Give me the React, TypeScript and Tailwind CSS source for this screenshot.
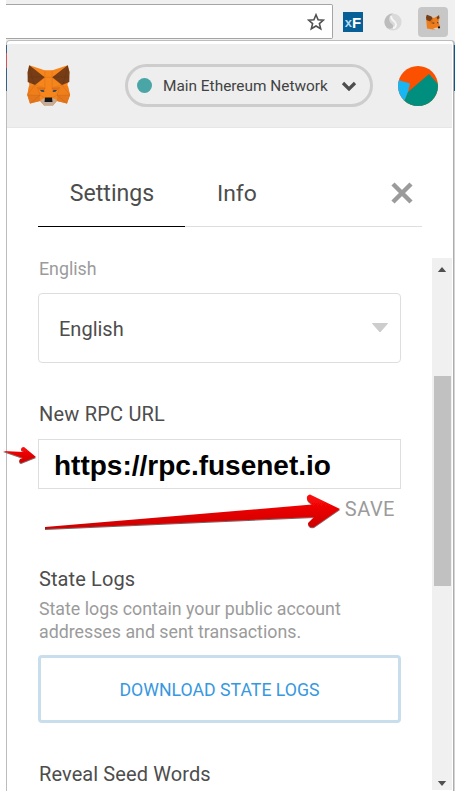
import React from "react";

function Fox({ className }: { className?: string }) {
  return (
    <svg viewBox="0 0 44 42" className={className} aria-label="MetaMask">
      <path d="M2.300 .3 17.700 5.300H25.500L40.700 .3 42.500 7 40.500 20 43 30 40 38.500 30 36 26 40.500H17L13 36 3 38.500 .3 30 2.300 20 .6 8Z" fill="#f6851b" />
      <path d="M2.300 .3 17.700 12.300 8 20 .7 17 .6 7ZM40.700 .3 25.300 12.300 35 20 42.300 17 42.500 7Z" fill="#763d16" />
      <path d="M2 21 8 20 14 29 .3 30ZM41 21 35 20 29 29 43 30Z" fill="#f07f1a" />
      <path d="M10 22 18 23 17.500 26 12 25ZM33 22 25 23 25.500 26 31 25Z" fill="#de701b" />
      <path d="M13 25 16.500 25 17.500 27 14.500 26.700ZM30 25 26.500 25 25.500 27 28.500 26.700Z" fill="#2f465c" />
      <path d="M.3 30H13V36L3 38.500ZM43 30H30V36L40 38.500Z" fill="#e4761b" />
      <path d="M13.500 35 18 33H25.500L30 35 26 40.500H17Z" fill="#c0ad9e" />
      <path d="M18 32.500H25L25.500 37H17.500Z" fill="#161616" />
      <path d="M17.700 12.300 18 5.500M25.300 12.300 25 5.500M17.700 12.300H25.300M17.700 12.300 18 24M25.300 12.300 25 24M8 20 17.700 12.300M35 20 25.300 12.300M8 20 18 23M35 20 25 23M10 22 13 30 .3 30 8 20M33 22 30 30 43 30 35 20M13 30 18 33M30 30 25 33M3 38.500 13 30M40 38.500 30 30" fill="none" stroke="#9b5018" strokeOpacity=".4" strokeWidth=".5" />
      <path d="M2 1 7 19M41 1 36 19M1 12 17 12M42 12 26 12" fill="none" stroke="#4f260c" strokeOpacity=".4" strokeWidth=".5" />
    </svg>
  );
}

function SmallFox() {
  return (
    <svg viewBox="0 0 16 16" className="h-[16px] w-[16px]">
      <path d="M1 1 6.500 3 9 4 13.500 1.500 14.500 4 13.500 8 15.300 13 13.500 15 8 15.500 2 14.500 1.500 9Z" fill="#ed7c1c" />
      <path d="M2 .8 6.500 2.500 7.500 5 5 7.500 1.500 6 1 3.500ZM14 1 14.500 4 12.500 5.500 11.500 3.500Z" fill="#73401c" />
      <path d="M5 7.500 7 5 8 9 6 10Z" fill="#d96a1a" />
      <path d="M7.500 8.500h1.800v1.300H7.500ZM12 8h1.300v1.200H12Z" fill="#5a4436" />
      <path d="M8 14.500 12 13.500 14 14.500 11.500 15.700Z" fill="#ddd2c8" />
      <path d="M13 12.600h2v1.600h-2Z" fill="#161616" />
    </svg>
  );
}

function Toolbar() {
  return (
    <div className="flex h-[40px] bg-[#f0f0f0]">
      <div className="mt-[4px] flex h-[35px] w-[327px] items-center justify-end rounded-r-[2px] border border-l-0 border-[#a5a5a5] bg-white pr-[7px]">
        <svg viewBox="0 0 18 18" className="h-[18px] w-[18px]">
          <path d="M9 1.8 11.1 6.7 16.5 7.1 12.4 10.6 13.7 15.8 9 13 4.3 15.8 5.6 10.6 1.5 7.1 6.9 6.7Z" fill="none" stroke="#505050" strokeWidth="1.6" />
        </svg>
      </div>
      <div className="ml-[10px] mt-[12px] flex h-[20px] w-[20px] items-center justify-center bg-[#075f98] font-['Liberation_Sans',Arial,sans-serif] text-[15px] font-bold leading-none text-white">
        <span className="text-[13px] text-[#b5d9ef]">x</span>F
      </div>
      <svg viewBox="0 0 18 18" className="ml-[21px] mt-[13px] h-[18px] w-[18px]">
        <circle cx="9" cy="9" r="8.6" fill="#dadada" />
        <path d="M9 .4A8.6 8.6 0 0 0 3 15C8 17 11 14 8 11 4 8 4 3 9 .4Z" fill="#bcbcbc" />
        <path d="M7.500 3C5.500 7 12.500 8 12 11.500 12 13.500 10.500 15 9 15" fill="none" stroke="#f6f6f6" strokeWidth="2" />
      </svg>
      <div className="ml-[16px] mt-[7px] flex h-[30px] w-[30px] items-center justify-center rounded-[4px] bg-[#c7c7c7]">
        <SmallFox />
      </div>
    </div>
  );
}

function Header() {
  return (
    <header className="mr-px flex h-[84px] items-center border-b border-[#e6e6e6] bg-[#eee] pl-[20px]">
      <Fox className="h-[42px] w-[44px]" />
      <div className="ml-[54px] flex h-[43px] w-[248px] items-center rounded-full border-[3px] border-[#cdcdcd] pl-[9px]">
        <span className="h-[15px] w-[15px] rounded-full bg-[#4aa6a6]" />
        <span className="ml-[11px] w-[163px] whitespace-nowrap pt-[2px] text-[15.4px] text-[#424242]">Main Ethereum Network</span>
        <svg viewBox="0 0 16 10" className="ml-[15px] h-[10px] w-[16px]"><path d="m2 2 6 6 6-6" fill="none" stroke="#4d4d4d" strokeWidth="3.2" /></svg>
      </div>
      <svg viewBox="0 0 40 40" className="ml-[25px] h-[40px] w-[40px] overflow-hidden rounded-full">
        <path d="M0 0h40v40H0z" fill="#fc5001" />
        <path d="M0 14 12 17.5 10 26 6 36 0 40Z" fill="#18b6f2" />
        <path d="M6 36 10 26 31 8 40 18V40H5Z" fill="#008f7f" />
      </svg>
    </header>
  );
}

function Settings() {
  return (
    <div className="flex w-[363px] flex-col text-[#4d4d4d]">
      <div className="h-[22px] whitespace-nowrap pl-px text-[17.8px] leading-[22px] text-[#9b9b9b]">English</div>
      <div className="mt-[13px] flex h-[70px] items-center justify-between rounded-[4px] border border-[#dedede] pl-[20px] pr-[11px] text-[20px]">
        <span className="pt-[2px]">English</span>
        <svg viewBox="0 0 18 10" className="h-[10px] w-[18px]"><path d="M1.500 .5H16.500L9 9Z" fill="#cdcdcd" stroke="#cdcdcd" strokeLinejoin="round" /></svg>
      </div>
      <div className="mt-[39px] h-[24px] whitespace-nowrap pl-px text-[20px] leading-[24px] tracking-[.2px]">New RPC URL</div>
      <div className="mt-[13px] flex h-[50px] items-center border border-[#dedede] pl-[15px] pt-[4px] font-['Liberation_Sans',Arial,sans-serif] text-[28px] font-bold text-black">https://rpc.fusenet.io</div>
      <div className="mt-[8px] h-[24px] pr-[6px] text-right text-[20px] leading-[24px] tracking-[.5px] text-[#9b9b9b]">SAVE</div>
      <div className="mt-[46px] h-[24px] pl-px text-[20px] leading-[24px] tracking-[.1px]">State Logs</div>
      <div className="mt-[6px] whitespace-nowrap pl-px text-[17.8px] leading-[23px] text-[#9b9b9b]">State logs contain your public account<br />addresses and sent transactions.</div>
      <div className="mt-[12px] flex h-[68px] items-center justify-center rounded-[4px] border-[3px] border-[#c8deed] pt-[2px] text-[17.7px] text-[#3798df]">DOWNLOAD STATE LOGS</div>
      <div className="mt-[39px] h-[24px] pl-px text-[20px] leading-[24px] tracking-[.1px]">Reveal Seed Words</div>
    </div>
  );
}

export default function App() {
  return (
    <div className="relative h-[791px] w-[455px] overflow-hidden bg-white pl-[6px] font-[Roboto,sans-serif]">
      <Toolbar />
      <div className="bg-[#f0f0f0]">
        <div className="h-[751px] rounded-t-[4px] border-l border-r-2 border-t border-[#bcbcbc] bg-white pt-[3px]">
          <Header />
          <nav className="ml-[31px] flex h-[99px] w-[384px] border-b border-[#dedede] pt-[44px] text-[23.1px] leading-[36px] text-[#4d4d4d]">
            <div className="-mb-px flex h-[55px] w-[147px] justify-center border-b border-black pl-px pt-[4px]">Settings</div>
            <div className="ml-[32px] pt-[4px] text-[22.9px]">Info</div>
            <svg viewBox="0 0 24 24" className="ml-auto mt-[9px] mr-[8px] h-[24px] w-[24px]"><path d="m3 3 18 18M21 3 3 21" stroke="#9b9b9b" strokeWidth="4.5" /></svg>
          </nav>
          <div className="flex h-[564px] pl-[31px] pt-[31px]">
            <Settings />
            <div className="ml-[31px] flex h-[532px] w-[20px] flex-col items-center bg-[#f0f0f0]">
              <svg viewBox="0 0 10 6" className="mt-[9px] h-[5px] w-[10px]"><path d="M0 6 5 0 10 6Z" fill="#505050" /></svg>
              <div className="mt-[104px] h-[210px] w-[17px] bg-[#c1c1c1]" />
              <svg viewBox="0 0 10 6" className="mt-auto mb-[4px] h-[5px] w-[10px]"><path d="M0 0H10L5 6Z" fill="#505050" /></svg>
            </div>
          </div>
        </div>
      </div>
      <svg viewBox="0 0 455 791" className="pointer-events-none absolute inset-0 h-full w-full">
        <defs>
          <linearGradient id="red" x1="0" y1="0" x2="0" y2="1"><stop stopColor="#ff0909" /><stop offset="1" stopColor="#cc0000" /></linearGradient>
          <filter id="sh"><feDropShadow dx="0" dy="1" stdDeviation=".6" floodOpacity=".6" /></filter>
        </defs>
        <g fill="url(#red)" filter="url(#sh)">
          <path d="M45 527 312 504.500 308 501Q305 496 310 494.500L340 509 314 527Q308 528 308 523L314 517 45 529Z" />
          <path d="M3 451 24 452 21 450Q21 447 24 447L36 457 21 463Q18 462 20 459L23 458Z" />
        </g>
        <path d="M6 45h1v46H6z" fill="#376183" /><path d="M6 53h1v15H6z" fill="#cf5656" />
        <path d="M454 45h1v46h-1z" fill="#07578b" />
        <path d="M454 91h1v700h-1z" fill="#d4d4d4" />
        <path d="M453 45h1v746h-1z" fill="#adadad" />
      </svg>
    </div>
  );
}
